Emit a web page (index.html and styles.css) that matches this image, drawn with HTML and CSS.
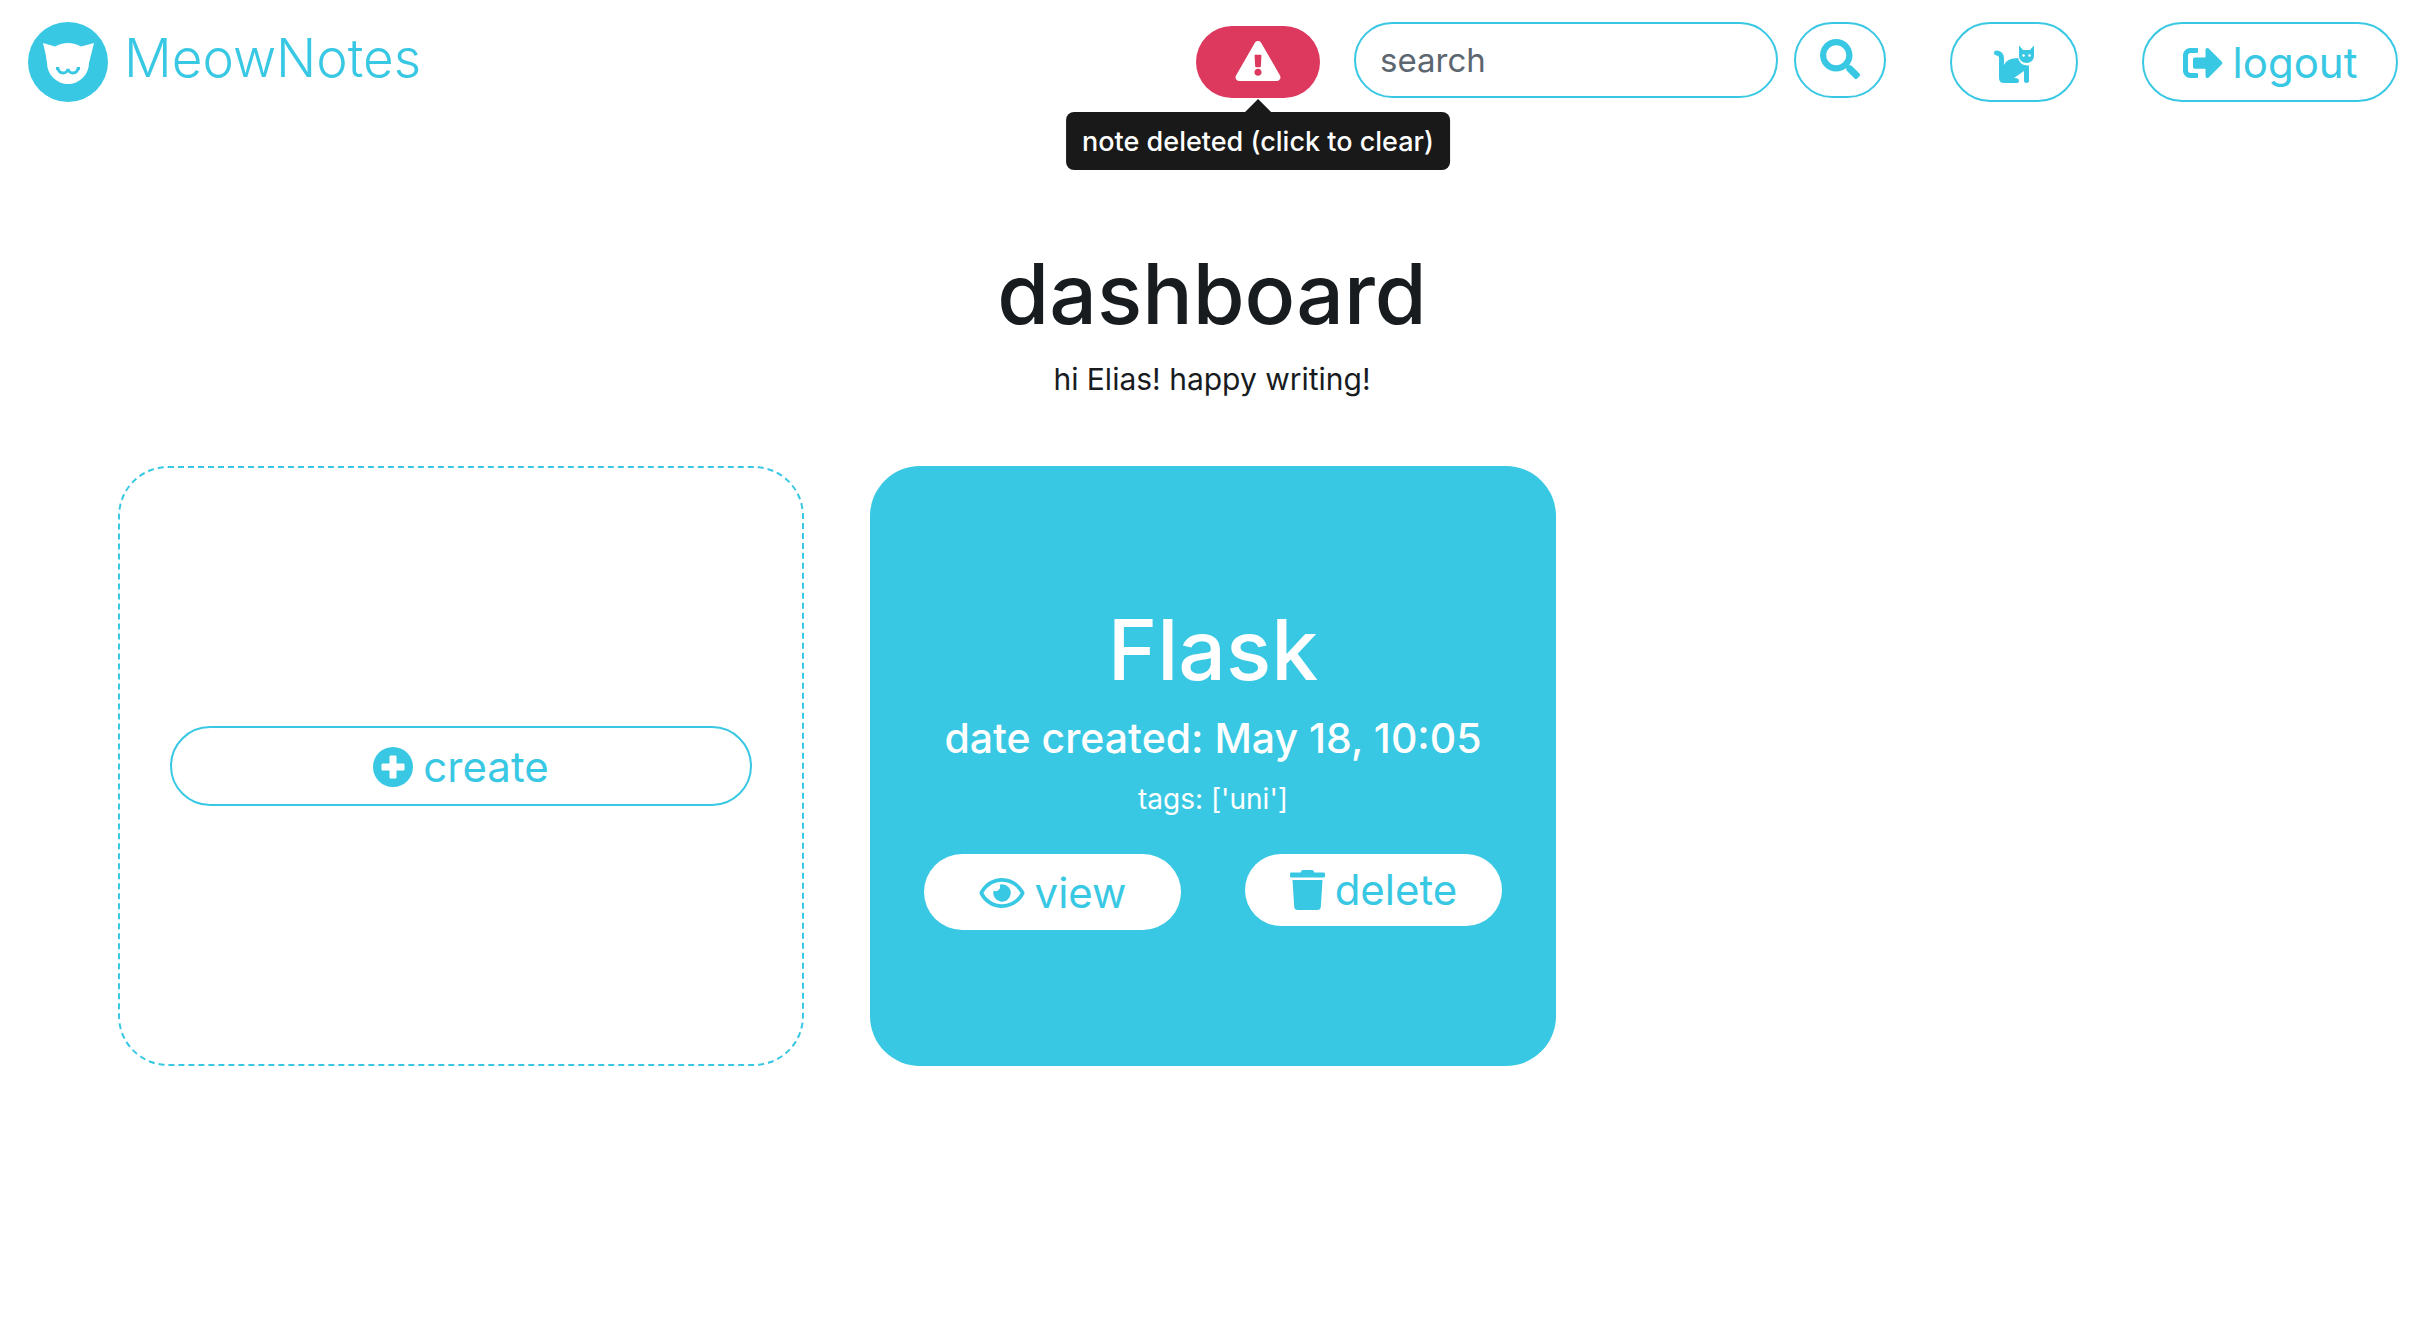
FILE: index.html
```html
<!DOCTYPE html>
<html lang="en">
<head>
<meta charset="utf-8">
<meta name="viewport" content="width=device-width, initial-scale=1">
<title>MeowNotes</title>
<link rel="stylesheet" href="styles.css">
</head>
<body>
<header class="navbar">
  <a class="brand" href="#">
    <svg class="logo" viewBox="0 0 80 80" aria-hidden="true">
      <circle cx="40" cy="40" r="40" fill="#39c8e3"/>
      <path d="M15 21L27 24.500Q33 21 40 21T53 24.500L66 21L61 41A21 21 0 0 1 19 41Q18 32 15 21Z" fill="#fff"/>
      <path d="M28 46.500H30Q31 51 35 51Q39 51 40 47Q41 51 45 51Q49 51 50 46.500H52" fill="none" stroke="#39c8e3" stroke-width="3"/>
    </svg>
    <span class="brand-name">MeowNotes</span>
  </a>
  <div class="alert-wrap">
    <button class="alert" type="button" aria-describedby="tip">
      <svg width="46" height="40" viewBox="0 0 576 512" aria-label="Alert"><path fill="currentColor" d="M569.500 440C588 472 564.800 512 527.900 512H48.100c-36.900 0-60-40.100-41.600-72L246.400 24c18.500-32 64.700-32 83.200 0l239.900 416zM288 354c-25.400 0-46 20.600-46 46s20.600 46 46 46 46-20.600 46-46-20.600-46-46-46zm-43.700-165.300l7.400 136c.4 6.400 5.600 11.300 12 11.300h48.600c6.400 0 11.600-5 12-11.300l7.400-136c.4-6.900-5.100-12.700-12-12.700h-63.400c-6.900 0-12.400 5.800-12 12.700z"/></svg>
    </button>
    <div class="tooltip" id="tip" role="tooltip">note deleted (click to clear)</div>
  </div>
  <form class="search">
    <input class="search-box" type="search" placeholder="search" aria-label="search">
    <button class="search-btn" type="button" aria-label="Search">
      <svg width="40" height="40" viewBox="0 0 512 512"><path fill="currentColor" d="M505 442.700L405.300 343c-4.500-4.500-10.600-7-17-7H372c27.600-35.300 44-79.700 44-128C416 93.100 322.900 0 208 0S0 93.100 0 208s93.100 208 208 208c48.300 0 92.700-16.400 128-44v16.300c0 6.400 2.500 12.500 7 17l99.700 99.700c9.400 9.400 24.600 9.400 33.900 0l28.300-28.300c9.400-9.400 9.400-24.600.1-34zM208 336c-70.700 0-128-57.200-128-128 0-70.700 57.200-128 128-128 70.700 0 128 57.200 128 128 0 70.700-57.200 128-128 128z"/></svg>
    </button>
  </form>
  <nav class="actions">
    <a class="pill cat" href="#" aria-label="Profile">
      <svg width="40" height="40" viewBox="0 0 40 40" fill="currentColor"><path d="M25 1.500L29 6H36L40 1.500V12A7.500 7 0 0 1 25 12Z"/><path d="M3 6.500H2.500A2.500 2.500 0 0 0 2.500 11.500Q5 11.500 5 14V34Q5 39 10 39H23Q25 39 25 37Q25 34 21 34H20L30 27V37Q30 39 32.500 39T35 37V21.500Q26 22 24 14Q13 14 10 21V14Q9.500 7 3 6.500Z"/><circle cx="29.500" cy="11.500" r="1.300" fill="#fff"/><circle cx="35.500" cy="11.500" r="1.300" fill="#fff"/></svg>
    </a>
    <a class="pill logout" href="#">
      <svg width="40" height="40" viewBox="0 0 512 512" aria-hidden="true"><path fill="currentColor" d="M497 273L329 441c-15 15-41 4.500-41-17v-96H152c-13.300 0-24-10.700-24-24v-96c0-13.300 10.700-24 24-24h136V88c0-21.400 25.900-32 41-17l168 168c9.300 9.400 9.300 24.600 0 34zM192 436v-40c0-6.600-5.400-12-12-12H96c-17.700 0-32-14.300-32-32V160c0-17.700 14.300-32 32-32h84c6.600 0 12-5.400 12-12V76c0-6.600-5.400-12-12-12H96c-53 0-96 43-96 96v192c0 53 43 96 96 96h84c6.600 0 12-5.400 12-12z"/></svg>
      <span>logout</span>
    </a>
  </nav>
</header>
<main>
  <section class="intro">
    <h1>dashboard</h1>
    <p>hi Elias! happy writing!</p>
  </section>
  <section class="cards">
    <article class="card new">
      <a class="pill create" href="#">
        <svg width="40" height="40" viewBox="0 0 40 40" aria-hidden="true"><path fill="currentColor" fill-rule="evenodd" d="M20 0a20 20 0 1 0 0 40a20 20 0 1 0 0-40ZM17.500 8.500h5q1 0 1 1v7h7q1 0 1 1v5q0 1-1 1h-7v7q0 1-1 1h-5q-1 0-1-1v-7h-7q-1 0-1-1v-5q0-1 1-1h7v-7q0-1 1-1Z"/></svg>
        <span>create</span>
      </a>
    </article>
    <article class="card note">
      <h2>Flask</h2>
      <h3>date created: May 18, 10:05</h3>
      <p>tags: ['uni']</p>
      <div class="note-actions">
        <a class="pill solid view" href="#">
          <svg width="46" height="40" viewBox="0 0 576 512" aria-hidden="true"><path fill="currentColor" d="M288 144a110.900 110.900 0 0 0-31.200 5 55.400 55.400 0 0 1 7.200 27 56 56 0 0 1-56 56 55.400 55.400 0 0 1-27-7.200A111.700 111.700 0 1 0 288 144zm284.500 97.400C518.300 135.600 410.900 64 288 64S57.700 135.600 3.500 241.400a32.400 32.400 0 0 0 0 29.200C57.700 376.400 165.100 448 288 448s230.300-71.600 284.500-177.400a32.400 32.400 0 0 0 0-29.200zM288 400c-98.700 0-189.100-55-237.900-144C98.900 167 189.300 112 288 112s189.100 55 237.900 144C477.100 345 386.700 400 288 400z"/></svg>
          <span>view</span>
        </a>
        <button class="pill solid delete" type="button">
          <svg width="35" height="40" viewBox="0 0 448 512" aria-hidden="true"><path fill="currentColor" d="M432 32H312l-9.400-18.700A24 24 0 0 0 281.100 0H166.800a23.700 23.700 0 0 0-21.400 13.300L136 32H16A16 16 0 0 0 0 48v32a16 16 0 0 0 16 16h416a16 16 0 0 0 16-16V48a16 16 0 0 0-16-16zM53.200 467a48 48 0 0 0 47.900 45h245.800a48 48 0 0 0 47.900-45L416 128H32z"/></svg>
          <span>delete</span>
        </button>
      </div>
    </article>
  </section>
</main>
</body>
</html>
```
FILE: styles.css
```css
* { box-sizing: border-box; }

body {
  margin: 0;
  background: #fff;
  color: #181c1f;
  font-family: Inter, "Liberation Sans", sans-serif;
  font-size: 28px;
  line-height: 42px;
}

h1, h2, h3, p { margin: 0; }
a { color: inherit; text-decoration: none; }
svg { display: block; flex: none; }
button, input { font: inherit; cursor: pointer; }

.navbar {
  display: flex;
  align-items: flex-start;
  padding: 22px 26px 0 28px;
  color: #39c8e3;
}

.brand {
  display: flex;
  gap: 16px;
  margin-right: auto;
}
.logo { width: 80px; height: 80px; }
.brand-name {
  font-size: 53px;
  font-weight: 300;
  line-height: 72px;
}

.alert-wrap {
  position: relative;
  margin: 4px 34px 0 0;
}
.alert {
  display: flex;
  align-items: center;
  justify-content: center;
  width: 124px;
  height: 72px;
  padding: 0 0 2px;
  border: 0;
  border-radius: 36px;
  background: #dd385d;
  color: #fff;
}
.tooltip {
  position: absolute;
  top: 86px;
  left: 50%;
  transform: translateX(-50%);
  padding: 9px 16px 7px;
  border-radius: 8px;
  background: #191919;
  color: #fff;
  font-size: 27px;
  font-weight: 500;
  white-space: nowrap;
}
.tooltip::before {
  content: "";
  position: absolute;
  bottom: 100%;
  left: 50%;
  margin-left: -13px;
  border: 13px solid transparent;
  border-top: 0;
  border-bottom-color: #191919;
}

.search {
  display: flex;
  gap: 16px;
  margin-right: 64px;
}
.search-box {
  width: 424px;
  height: 76px;
  padding: 0 24px;
  border: 2px solid #39c8e3;
  border-radius: 38px;
  background: #fff;
  font-size: 33px;
  appearance: none;
}
.search-box::placeholder { color: #5c6670; opacity: 1; }
.search-btn {
  display: flex;
  justify-content: center;
  width: 92px;
  height: 76px;
  padding: 15px 0 0;
  border: 2px solid #39c8e3;
  border-radius: 38px;
  background: #fff;
  color: #39c8e3;
}

.actions { display: flex; gap: 64px; }

.pill {
  display: flex;
  align-items: center;
  justify-content: center;
  gap: 10px;
  height: 80px;
  padding-top: 2px;
  border: 2px solid #39c8e3;
  border-radius: 40px;
  color: #39c8e3;
  font-size: 42px;
  line-height: 60px;
}
.cat { width: 128px; padding-top: 4px; }
.logout { width: 256px; }

.intro {
  padding: 144px 24px 66px;
  text-align: center;
}
h1, h2 {
  font-size: 84px;
  font-weight: 500;
  line-height: 96px;
}
.intro p {
  margin-top: 16px;
  font-size: 30px;
}

.cards {
  display: grid;
  grid-template-columns: repeat(3, 1fr);
  gap: 66px;
  padding: 0 116px 64px 118px;
}
.card {
  display: flex;
  flex-direction: column;
  justify-content: center;
  min-height: 600px;
  padding: 0 54px;
  border-radius: 50px;
}
.new {
  padding: 0 50px;
  border: 2px dashed #39c8e3;
}
.note {
  background: #39c8e3;
  color: #fff;
  text-align: center;
}
.note h3 {
  margin-top: 16px;
  font-size: 41px;
  font-weight: 500;
  line-height: 48px;
}
.note p { margin-top: 16px; }
.note-actions {
  display: grid;
  grid-template-columns: 1fr 1fr;
  align-items: start;
  gap: 64px;
  margin-top: 34px;
}
.solid {
  border: 0;
  background: #fff;
}
.view { height: 76px; }
.delete {
  height: 72px;
  padding: 0;
}
```
